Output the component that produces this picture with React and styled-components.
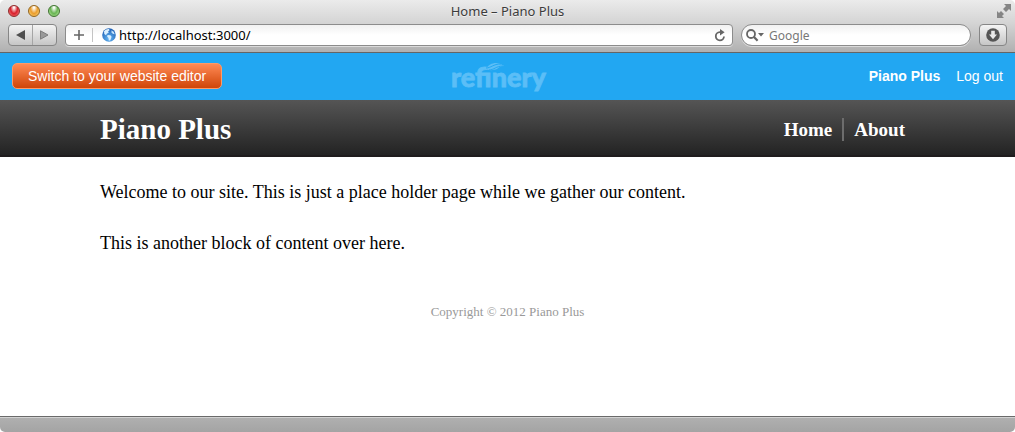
import React from "react";
import styled, { createGlobalStyle } from "styled-components";

const App = () => (
  <Browser>
    <GlobalStyle />
    <Chrome>
      <TitleBar>
        <Lights>
          <Light aria-label="Close" $edge="#8e2b2b" $dark="#d8202c" $light="#ff8d88" />
          <Light aria-label="Minimize" $edge="#93651f" $dark="#eb9d2c" $light="#ffe08a" />
          <Light aria-label="Zoom" $edge="#3f7330" $dark="#69b554" $light="#c4f2a8" />
        </Lights>
        <Title>Home – Piano Plus</Title>
        <FullScreen aria-label="Full screen">
          <svg width="14" height="14" viewBox="0 0 14 14" fill="#858585">
            <path d="M7 0h7v7l-2-2-3 3-3-3 3-3z" />
            <path d="M0 7l2 2 2-2 3 3-2 2 2 2H0z" />
          </svg>
        </FullScreen>
      </TitleBar>
      <Toolbar>
        <History>
          <HistoryButton aria-label="Back">
            <svg width="9" height="10" viewBox="0 0 9 10">
              <path d="M9 0v10L0 5z" fill="#4f4f4f" />
            </svg>
          </HistoryButton>
          <HistoryButton aria-label="Forward">
            <svg width="9" height="10" viewBox="0 0 9 10">
              <path d="M.5.8v8.4L8 5z" fill="#999" stroke="#7c7c7c" />
            </svg>
          </HistoryButton>
        </History>
        <AddressBar>
          <AddButton aria-label="Add bookmark">
            <svg width="10" height="10" viewBox="0 0 10 10">
              <path d="M5 0v10M0 5h10" stroke="#666" strokeWidth="1.6" />
            </svg>
          </AddButton>
          <Globe />
          <AddressInput aria-label="Address" defaultValue="http://localhost:3000/" />
          <IconButton aria-label="Reload">
            <svg width="12" height="13" viewBox="0 0 12 13">
              <path
                d="M7 3.2H5.8a4.1 4.1 0 1 0 4.2 4.3"
                fill="none"
                stroke="#666"
                strokeWidth="1.8"
              />
              <path d="M6 0l4.6 3.2L6 6.4z" fill="#666" />
            </svg>
          </IconButton>
        </AddressBar>
        <SearchBar>
          <svg width="18" height="13" viewBox="0 0 18 13">
            <circle cx="5" cy="5" r="4" fill="none" stroke="#666" strokeWidth="1.8" />
            <path d="M8 8l3.6 3.8" stroke="#666" strokeWidth="2.2" />
            <path d="M12 4h6l-3 3.5z" fill="#666" />
          </svg>
          <SearchInput aria-label="Search" placeholder="Google" />
        </SearchBar>
        <Downloads aria-label="Downloads">
          <svg width="14" height="14" viewBox="0 0 14 14">
            <circle cx="7" cy="7" r="6.8" fill="#555" />
            <path d="M5.2 2.8h3.6v3.7H11L7 11.2 3 6.5h2.2z" fill="#e8e8e8" />
          </svg>
        </Downloads>
      </Toolbar>
    </Chrome>

    <AdminBar>
      <EditorButton>Switch to your website editor</EditorButton>
      <RefineryLogo />
      <AdminLinks>
        <AdminLink href="#site" $bold>
          Piano Plus
        </AdminLink>
        <AdminLink href="#logout">Log out</AdminLink>
      </AdminLinks>
    </AdminBar>

    <SiteHeader>
      <SiteName>Piano Plus</SiteName>
      <Menu>
        <MenuLink href="#home">Home</MenuLink>
        <MenuLink href="#about">About</MenuLink>
      </Menu>
    </SiteHeader>

    <Content>
      <Block>
        Welcome to our site. This is just a place holder page while we gather our
        content.
      </Block>
      <Block>This is another block of content over here.</Block>
    </Content>
    <Footer>Copyright © 2012 Piano Plus</Footer>
    <StatusBar />
  </Browser>
);

const Globe = () => (
  <svg width="14" height="14" viewBox="0 0 14 14" aria-hidden="true">
    <defs>
      <radialGradient id="sea" cx="50%" cy="75%" r="70%">
        <stop offset="0" stopColor="#67b9f5" />
        <stop offset="1" stopColor="#1d5fb4" />
      </radialGradient>
    </defs>
    <circle cx="7" cy="7" r="6.8" fill="url(#sea)" />
    <path
      d="M2 3.2C3.6 1.4 5.4.8 7 1l.6 1.3-1.5.9.7 1.3-2 1.2L4 7.3 2.3 6z"
      fill="#d9efff"
    />
    <path d="M5.6 7l2.8.3 1.2 1.5-1.3 3.4-1.5.6-.3-2.7-1.4-1.5z" fill="#d9efff" />
    <path d="M9.5 2.2l2.2 1.5 1 2.6-1.5-.2-1.7-1.4z" fill="#c3e4fd" />
  </svg>
);

const RefineryLogo = () => (
  <Logo width="100" height="36" viewBox="0 0 100 36" role="img" aria-label="refinery">
    <text x="1" y="29">
      refinery
    </text>
    <path d="M38 0h20v13H38z" fill="#22a7f2" />
    <path d="M36 11c2-4 6-6 10-6 3 0 5 1 8 3-3 0-5 1-7 3-3 1-7 2-11 0z" fill="#5bbef7" />
    <g fill="none" stroke="#22a7f2">
      <path d="M36 10c5 0 7-4 15-4" />
      <path d="M39 12c5 0 7-4 14-4" />
    </g>
  </Logo>
);

const GlobalStyle = createGlobalStyle`
  * {
    box-sizing: border-box;
  }
  body {
    margin: 0;
    background: white;
  }
  button {
    padding: 0;
    border: 0;
    background: none;
  }
  svg {
    display: block;
    flex: none;
  }
`;

const Browser = styled.div`
  display: flex;
  flex-direction: column;
  min-height: 100vh;
  font-family: "Liberation Serif", Georgia, serif;
`;

const Chrome = styled.div`
  border-bottom: 1px solid #656565;
  border-radius: 5px 5px 0 0;
  background: linear-gradient(#ebebeb, #d4d4d4 45%, #b0b0b0);
  font-family: "Noto Sans", "Open Sans", sans-serif;
`;

const TitleBar = styled.div`
  display: grid;
  grid-template-columns: 1fr auto 1fr;
  align-items: center;
  height: 24px;
  padding: 0 4px;
`;

const Lights = styled.div`
  display: flex;
  gap: 8px;
  padding: 0 4px 2px;
`;

const Light = styled.button`
  width: 12px;
  height: 12px;
  border: 1px solid ${props => props.$edge};
  border-radius: 50%;
  background: radial-gradient(
    ellipse at 50% 15%,
    white 5%,
    ${props => props.$dark} 50%,
    ${props => props.$light}
  );
`;

const Title = styled.div`
  padding-bottom: 2px;
  color: #3c3c3c;
  font-size: 13px;
  line-height: 22px;
  text-shadow: 0 1px 0 rgba(255, 255, 255, 0.6);
`;

const FullScreen = styled.button`
  justify-self: end;
  padding-bottom: 2px;
`;

const Toolbar = styled.div`
  display: flex;
  gap: 8px;
  padding: 0 8px 6px;
`;

const History = styled.div`
  display: flex;
  width: 49px;
  height: 22px;
  border: 1px solid #868686;
  border-radius: 4px;
  background: linear-gradient(#f4f4f4, #c6c6c6);
`;

const HistoryButton = styled.button`
  display: flex;
  flex: 1;
  align-items: center;
  justify-content: center;
  & + & {
    border-left: 1px solid #a5a5a5;
  }
`;

const Field = styled.div`
  display: flex;
  align-items: center;
  height: 22px;
  border: 1px solid #8c8c8c;
  background: linear-gradient(#f1f1f1, white 50%);
  box-shadow: 0 1px 0 rgba(255, 255, 255, 0.5);
  input {
    flex: 1;
    min-width: 0;
    padding: 0;
    border: 0;
    outline: 0;
    background: none;
    font-family: inherit;
  }
`;

const AddressBar = styled(Field)`
  flex: 1;
  gap: 3px;
  padding-right: 6px;
  border-radius: 4px;
`;

const AddButton = styled.button`
  display: flex;
  align-items: center;
  justify-content: center;
  width: 27px;
  height: 14px;
  margin-right: 6px;
  border-right: 1px solid #c4c4c4;
`;

const IconButton = styled.button`
  display: flex;
`;

const AddressInput = styled.input`
  color: black;
  font-size: 13px;
`;

const SearchBar = styled(Field)`
  gap: 5px;
  width: 230px;
  padding: 0 8px 0 4px;
  border-radius: 11px;
`;

const SearchInput = styled.input`
  font-size: 12px;
  &::placeholder {
    color: #777;
    opacity: 1;
  }
`;

const Downloads = styled.button`
  display: flex;
  align-items: center;
  justify-content: center;
  width: 28px;
  height: 22px;
  border: 1px solid #868686;
  border-radius: 4px;
  background: linear-gradient(#f4f4f4, #c6c6c6);
`;

const AdminBar = styled.div`
  display: grid;
  grid-template-columns: 1fr auto 1fr;
  align-items: center;
  height: 47px;
  padding: 0 12px 2px;
  background: #22a7f2;
  font-family: "Liberation Sans", Arial, sans-serif;
  font-size: 14px;
`;

const EditorButton = styled.button`
  justify-self: start;
  height: 26px;
  padding: 0 15px;
  border: 1px solid #ff9a66;
  border-radius: 5px;
  background: linear-gradient(#ff8a55, #cf4509);
  color: white;
  font: inherit;
`;

const Logo = styled.svg`
  margin-right: 16px;
  text {
    fill: #5bbef7;
    stroke: #5bbef7;
    stroke-width: 0.8;
    font-family: Lato, sans-serif;
    font-size: 27px;
    font-weight: 900;
  }
`;

const AdminLinks = styled.div`
  display: flex;
  justify-content: flex-end;
  gap: 16px;
`;

const AdminLink = styled.a`
  color: white;
  font-weight: ${props => (props.$bold ? "bold" : "normal")};
  text-decoration: none;
`;

const SiteHeader = styled.header`
  display: flex;
  align-items: center;
  justify-content: space-between;
  height: 57px;
  padding: 3px 100px 0;
  border-bottom: 2px solid #1f1c1d;
  background: linear-gradient(#555, #232323);
  color: white;
`;

const SiteName = styled.h1`
  margin: 0;
  font-size: 29px;
  line-height: 32px;
`;

const Menu = styled.nav`
  display: flex;
`;

const MenuLink = styled.a`
  padding: 0 10px;
  color: white;
  font-size: 19px;
  font-weight: bold;
  line-height: 23px;
  text-decoration: none;
  & + & {
    border-left: 2px solid #6d6d6d;
  }
`;

const Content = styled.main`
  padding: 24px 100px 0;
`;

const Block = styled.p`
  margin: 0 0 29px;
  color: black;
  font-size: 18px;
  line-height: 22px;
`;

const Footer = styled.footer`
  flex: 1;
  padding: 20px 100px;
  color: #999;
  font-size: 13px;
  line-height: 18px;
  text-align: center;
`;

const StatusBar = styled.div`
  height: 16px;
  border-top: 1px solid #6a6a6a;
  border-radius: 0 0 5px 5px;
  background: linear-gradient(#b0b0b0, #a4a4a4);
  box-shadow: inset 0 1px 0 #d2d2d2;
`;

export default App;
